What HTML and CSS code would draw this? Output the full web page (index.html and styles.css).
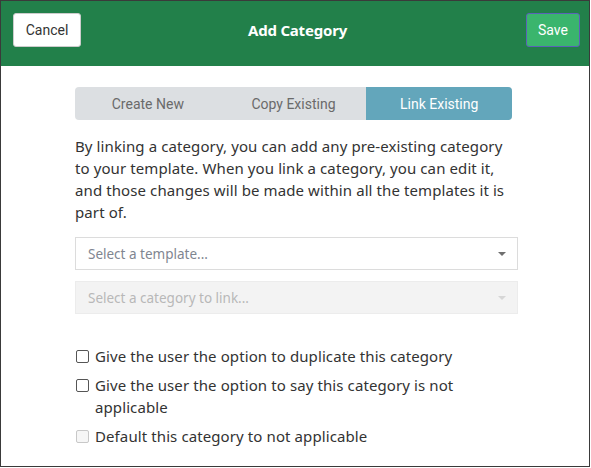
FILE: index.html
```html
<!DOCTYPE html>
<html>
<head>
<meta charset="utf-8">
<link rel="stylesheet" href="styles.css">
</head>
<body>
<div class="modal">
  <header class="modal-header">
    <div class="left"><button class="btn btn-cancel">Cancel</button></div>
    <h1 class="title">Add Category</h1>
    <div class="right"><button class="btn btn-save">Save</button></div>
  </header>
  <main class="modal-body">
    <div class="tabs">
      <div class="tab">Create New</div>
      <div class="tab">Copy Existing</div>
      <div class="tab active">Link Existing</div>
    </div>
    <p class="desc">By linking a category, you can add any pre-existing category to your template. When you link a category, you can edit it, and those changes will be made within all the templates it is part of.</p>
    <div class="select">
      <span class="placeholder">Select a template...</span>
      <span class="caret"></span>
    </div>
    <div class="select disabled">
      <span class="placeholder">Select a category to link...</span>
      <span class="caret"></span>
    </div>
    <div class="checks">
      <label class="check"><span class="box"></span><span class="label">Give the user the option to duplicate this category</span></label>
      <label class="check"><span class="box"></span><span class="label">Give the user the option to say this category is not applicable</span></label>
      <label class="check disabled"><span class="box"></span><span class="label">Default this category to not applicable</span></label>
    </div>
  </main>
</div>
</body>
</html>
```

FILE: styles.css
```css
* { box-sizing: border-box; }
html, body { margin: 0; padding: 0; background: #fff; }
.modal {
  width: 590px;
  height: 467px;
  border: 1px solid #3a3a3a;
  background: #fff;
  font-family: "Noto Sans", sans-serif;
  color: #333;
}
.modal-header {
  height: 65px;
  background: #22804a;
  display: grid;
  grid-template-columns: 1fr auto 1fr;
  align-items: start;
  padding: 12px 9px 0 12px;
}
.left { display: flex; justify-content: flex-start; }
.right { display: flex; justify-content: flex-end; }
.title {
  margin: 0;
  font-family: "Noto Sans", sans-serif;
  font-weight: 700;
  font-size: 15px;
  line-height: 22px;
  padding-top: 6px;
  color: #fff;
  letter-spacing: -0.2px;
  position: relative;
  left: 1px;
}
.btn {
  font-family: Roboto, sans-serif;
  font-size: 14px;
  height: 34px;
  border-radius: 3px;
  padding: 0 10px;
  cursor: pointer;
}
.btn-cancel {
  background: #fff;
  color: #333;
  border: 1px solid #ccc;
  width: 68px;
}
.btn-save {
  background: #3ab56d;
  color: #fff;
  border: 1px solid #5a62b8;
  width: 54px;
}
.modal-body {
  padding: 21px 71px 0 74px;
}
.tabs {
  display: grid;
  grid-template-columns: 1fr 1fr 1fr;
  width: 437px;
  height: 33px;
  border-radius: 4px;
  overflow: hidden;
  background: #dcdfe2;
}
.tab {
  display: flex;
  align-items: center;
  justify-content: center;
  font-family: Roboto, sans-serif;
  font-size: 14px;
  color: #6a6a6a;
}
.tab.active {
  background: #63a6bb;
  color: #fff;
}
.desc {
  margin: 15px 0 14px;
  font-size: 15px;
  line-height: 22px;
  letter-spacing: 0.1px;
  color: #333;
}
.select {
  height: 33px;
  border: 1px solid #dcdcdc;
  background: #fff;
  display: flex;
  align-items: center;
  justify-content: space-between;
  padding: 0 11px 0 12px;
  margin-bottom: 11px;
}
.placeholder {
  font-size: 13.5px;
  color: #7f8691;
}
.caret {
  width: 0;
  height: 0;
  border-left: 4px solid transparent;
  border-right: 4px solid transparent;
  border-top: 4px solid #6f6f6f;
}
.select.disabled {
  background: #f3f3f3;
  border-color: #ececec;
}
.select.disabled .placeholder { color: #b8b8b8; }
.select.disabled .caret { border-top-color: #d6d6d6; }
.checks {
  margin-top: 31px;
  display: flex;
  flex-direction: column;
  gap: 7px;
}
.check {
  display: flex;
  align-items: flex-start;
  gap: 6px;
  font-size: 15px;
  line-height: 22px;
  letter-spacing: 0.1px;
  color: #333;
}
.box {
  flex: none;
  width: 13px;
  height: 13px;
  margin-top: 5px;
  margin-left: 1px;
  border: 1px solid #555;
  border-radius: 2px;
  background: #fff;
}
.check.disabled .box {
  border-color: #c8c8c8;
  background: #f6f6f6;
}
.label { max-width: 400px; }
```
